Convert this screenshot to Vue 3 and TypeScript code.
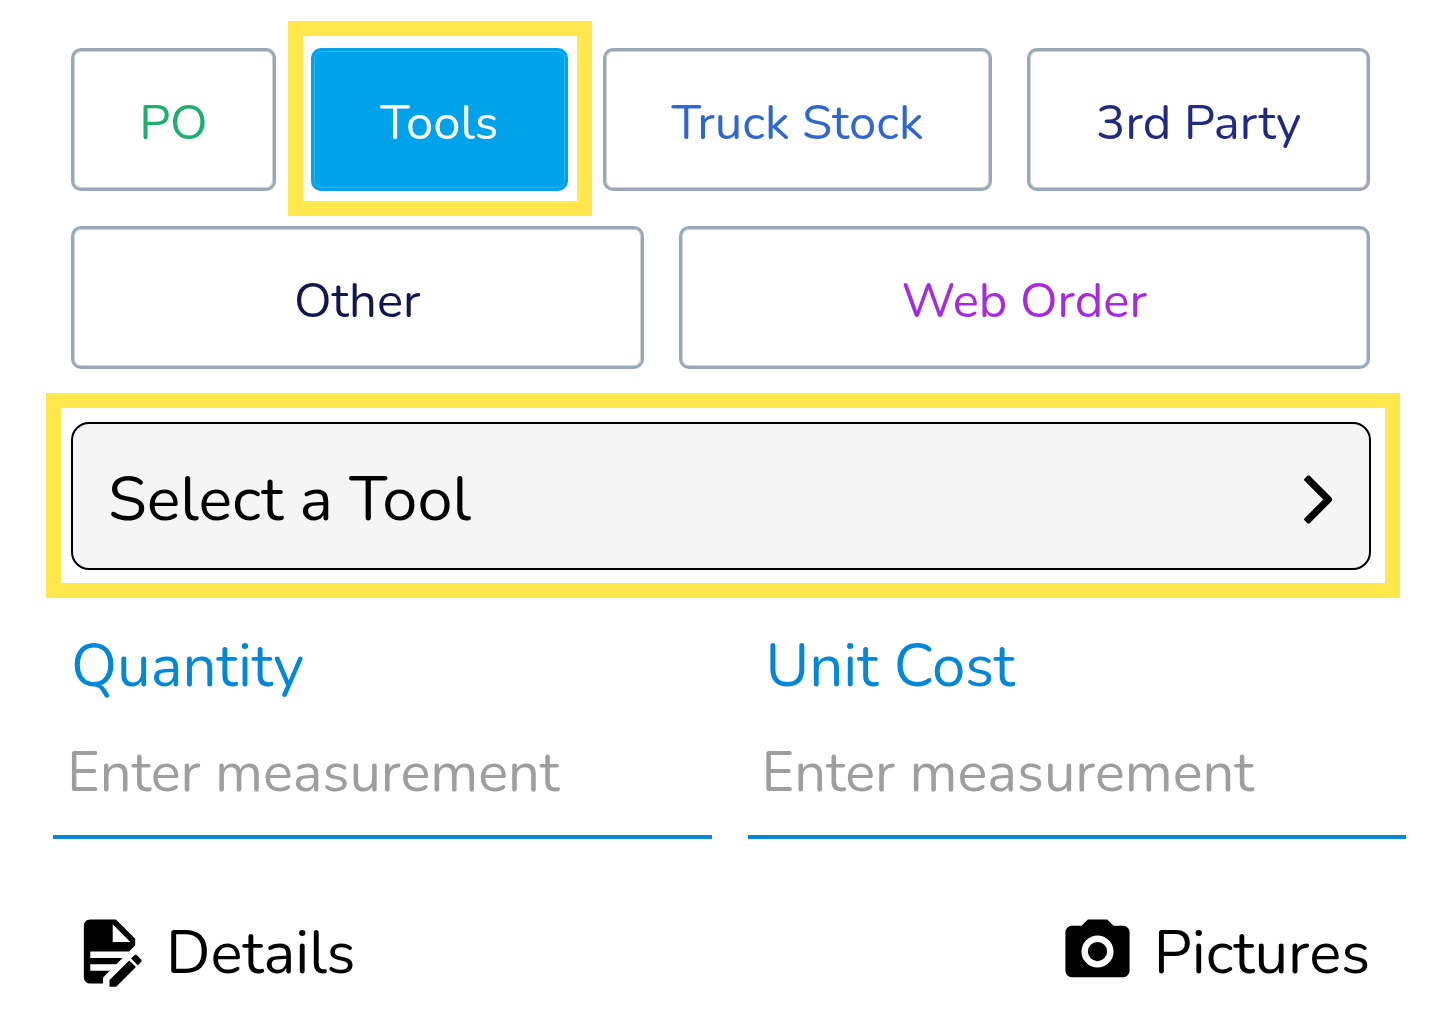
<script setup lang="ts">
import { ref } from 'vue'

interface Category {
  label: string
  color: string
  grow: number
}

const rows: Category[][] = [
  [
    { label: 'PO', color: '#1bb06e', grow: 199 },
    { label: 'Tools', color: '#ffffff', grow: 251 },
    { label: 'Truck Stock', color: '#3066d0', grow: 384 },
    { label: '3rd Party', color: '#1f2a80', grow: 337 },
  ],
  [
    { label: 'Other', color: '#10164f', grow: 567 },
    { label: 'Web Order', color: '#a62be0', grow: 686 },
  ],
]

const selected = ref('Tools')
const quantity = ref('')
const unitCost = ref('')
</script>

<template>
  <main class="form">
    <div class="categories">
      <div v-for="(row, i) in rows" :key="i" class="row">
        <button
          v-for="c in row"
          :key="c.label"
          type="button"
          class="category"
          :class="{ active: c.label === selected }"
          :style="{ flexGrow: c.grow, color: c.label === selected ? '#ffffff' : c.color }"
          @click="selected = c.label"
        >
          {{ c.label }}
        </button>
      </div>
    </div>

    <button type="button" class="picker">
      <span>Select a Tool</span>
      <svg class="chevron" viewBox="0 0 30 50" aria-hidden="true">
        <path d="M28.200 25.500L5 2.300L1.800 5.500L21.800 25.500L1.800 45.500L5 48.700Z" fill="currentColor" stroke="currentColor" stroke-width="1.600" stroke-linejoin="round" />
        <path d="M3.700 3.800L25.400 25.500L3.700 47.200" fill="none" stroke="currentColor" stroke-width="7" stroke-linejoin="round" />
      </svg>
    </button>

    <div class="fields">
      <div class="field">
        <label for="quantity">Quantity</label>
        <input id="quantity" v-model="quantity" type="text" placeholder="Enter measurement" />
      </div>
      <div class="field">
        <label for="unit-cost">Unit Cost</label>
        <input id="unit-cost" v-model="unitCost" type="text" placeholder="Enter measurement" />
      </div>
    </div>

    <div class="actions">
      <button type="button" class="action">
        <svg viewBox="0 0 24 24" aria-hidden="true">
          <path d="M6,2C4.890,2 4,2.890 4,4V20A2,2 0 0,0 6,22H10V20.090L12.090,18H6V16H14.090L16.090,14H6V12H18.090L20,10.090V8L14,2H6M13,3.500L18.500,9H13V3.500M20.150,13C20,13 19.860,13.050 19.750,13.160L18.730,14.180L20.820,16.260L21.840,15.250C22.050,15.030 22.050,14.670 21.840,14.460L20.540,13.160C20.430,13.050 20.290,13 20.150,13M18.140,14.770L12,20.920V23H14.080L20.230,16.850L18.140,14.770Z" />
        </svg>
        <span>Details</span>
      </button>
      <button type="button" class="action">
        <svg viewBox="0 0 24 24" aria-hidden="true">
          <path d="M4,4H7L9,2H15L17,4H20A2,2 0 0,1 22,6V18A2,2 0 0,1 20,20H4A2,2 0 0,1 2,18V6A2,2 0 0,1 4,4M12,7A5,5 0 0,0 7,12A5,5 0 0,0 12,17A5,5 0 0,0 17,12A5,5 0 0,0 12,7M12,9A3,3 0 0,1 15,12A3,3 0 0,1 12,15A3,3 0 0,1 9,12A3,3 0 0,1 12,9Z" />
        </svg>
        <span>Pictures</span>
      </button>
    </div>
  </main>
</template>

<style>
body {
  margin: 0;
  background: #ffffff;
}
</style>

<style scoped>
.form {
  box-sizing: border-box;
  padding: 48px 0 40px;
  font-family: Nunito, 'Noto Sans', sans-serif;
  color: #000000;
}

button,
input {
  box-sizing: border-box;
  margin: 0;
  font-family: inherit;
  font-weight: 400;
}

button {
  cursor: pointer;
}

.categories {
  display: flex;
  flex-direction: column;
  gap: 35px;
  padding: 0 70px 0 71px;
}

.row {
  display: flex;
  gap: 35px;
}

.category {
  position: relative;
  flex: 1 1 0;
  height: 143px;
  padding: 6px 0 0;
  border: 3px solid #98a8b4;
  border-radius: 10px;
  background: #ffffff;
  box-shadow: inset 0 0 0 1px #ccd4da;
  font-size: 49px;
  line-height: 64px;
  white-space: nowrap;
}

.category.active {
  border-color: #00a3ea;
  background: #00a3ea;
  box-shadow: inset 0 0 0 1px #33b5ee;
}

.category.active::after,
.picker::after {
  content: '';
  position: absolute;
  border: 15px solid #ffe74c;
  pointer-events: none;
}

.category.active::after {
  inset: -30px -27px -28px -26px;
}

.picker {
  position: relative;
  display: flex;
  align-items: center;
  justify-content: space-between;
  width: calc(100% - 140px);
  height: 148px;
  margin: 53px 69px 0 71px;
  padding: 6px 36px 0 35px;
  border: 2px solid #000000;
  border-radius: 18px;
  background: #f5f5f5;
  color: #000000;
  font-size: 63px;
  line-height: 80px;
}

.picker::after {
  inset: -31px -31px -30px -27px;
}

.chevron {
  width: 30px;
  height: 50px;
}

.fields {
  display: flex;
  gap: 36px;
  padding: 54px 34px 0 53px;
}

.field {
  display: flex;
  flex: 1 1 0;
  flex-direction: column;
  min-width: 0;
}

.field label {
  padding-left: 18px;
  color: #0387d9;
  font-size: 60px;
  line-height: 84px;
}

.field input {
  width: 100%;
  height: 131px;
  padding: 2px 14px 0;
  border: 0;
  border-bottom: 4px solid #0387d9;
  background: transparent;
  color: #000000;
  font-size: 56px;
}

.field input::placeholder {
  color: #9e9e9e;
  opacity: 1;
}

.actions {
  display: flex;
  justify-content: space-between;
  padding: 72px 70px 0 71px;
}

.action {
  display: flex;
  align-items: center;
  gap: 18px;
  padding: 0;
  border: 0;
  background: none;
  color: #000000;
  font-size: 60px;
  line-height: 77px;
}

.action span {
  padding-top: 4px;
}

.action svg {
  width: 77px;
  height: 77px;
  fill: currentColor;
}
</style>
